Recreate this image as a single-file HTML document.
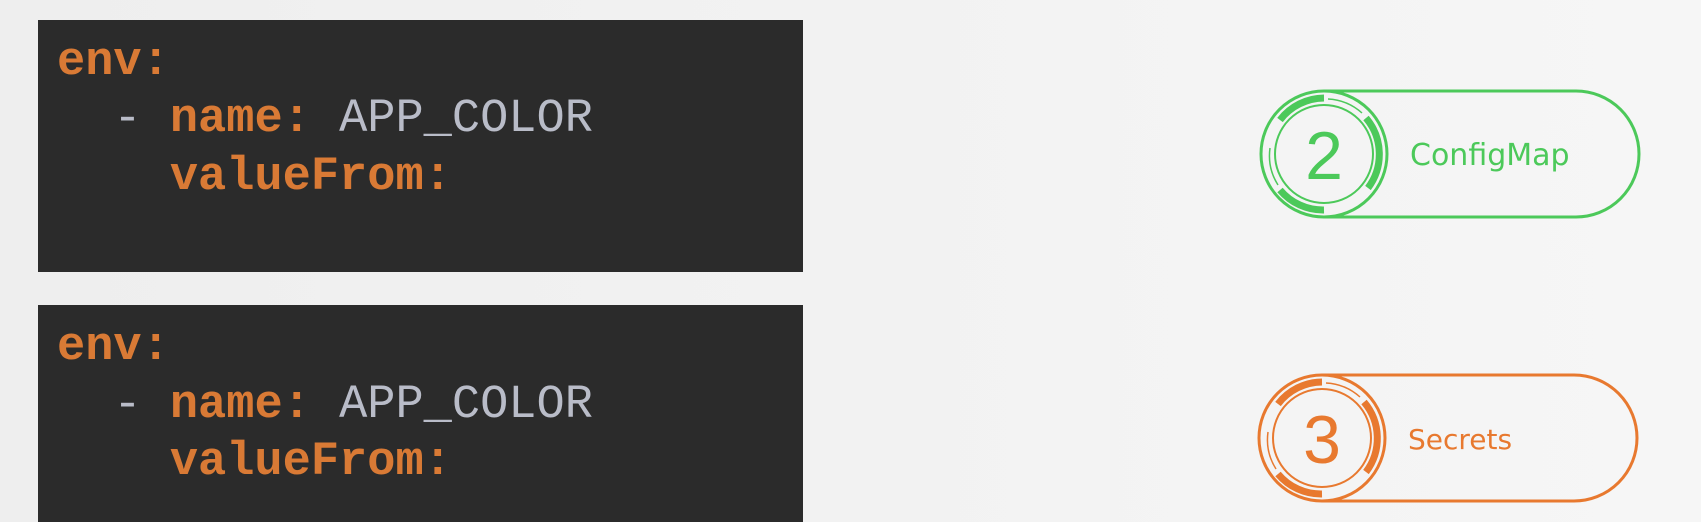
<!DOCTYPE html>
<html><head><style>
html,body{margin:0;padding:0}
body{width:1701px;height:522px;overflow:hidden;background:linear-gradient(90deg,#eeeeee,#f6f6f6);position:relative;font-family:"Liberation Sans",sans-serif}
.box{position:absolute;left:38px;width:765px;background:#2b2b2b}
.code{position:absolute;left:57px;font-family:"Liberation Mono",monospace;font-size:47px;white-space:pre;line-height:1}
.k{color:#d97a35;font-weight:bold}
.v{color:#b9bcc8}
.pill{position:absolute}
</style></head><body>
<div class="box" style="top:20px;height:252px"></div>
<div class="box" style="top:305px;height:217px"></div>
<div class="code" style="top:39px"><span class="k">env:</span></div>
<div class="code" style="top:96px"><span class="v">  - </span><span class="k">name:</span><span class="v"> APP_COLOR</span></div>
<div class="code" style="top:154px"><span class="k">    valueFrom:</span></div>
<div class="code" style="top:324px"><span class="k">env:</span></div>
<div class="code" style="top:382px"><span class="v">  - </span><span class="k">name:</span><span class="v"> APP_COLOR</span></div>
<div class="code" style="top:439px"><span class="k">    valueFrom:</span></div>

<svg class="pill" style="left:1258px;top:88px" width="386" height="132" viewBox="0 0 386 132">
<g fill="none" stroke="#4cc95a">
<path d="M66 3 H318 A63 63 0 0 1 318 129 H66" stroke-width="3"/>
<circle cx="66" cy="66" r="63" stroke-width="3"/>
<circle cx="66" cy="66" r="49" stroke-width="2"/>
<path d="M66 10 A56 56 0 0 0 22 32" stroke-width="7"/>
<path d="M108 30 A56 56 0 0 1 110 100" stroke-width="7"/>
<path d="M66 122 A56 56 0 0 1 22 102" stroke-width="7"/>
<path d="M70 11 A55 55 0 0 1 104 25" stroke-width="1.5"/>
<path d="M12 60 A55 55 0 0 0 20 97" stroke-width="1.5"/>
</g>
<text x="66" y="91" text-anchor="middle" font-size="68" fill="#4cc95a" font-family="Liberation Sans">2</text>
<text x="152" y="77" font-size="30" fill="#4cc95a" font-family="DejaVu Sans">ConfigMap</text>
</svg>

<svg class="pill" style="left:1256px;top:372px" width="386" height="132" viewBox="0 0 386 132">
<g fill="none" stroke="#e8792f">
<path d="M66 3 H318 A63 63 0 0 1 318 129 H66" stroke-width="3"/>
<circle cx="66" cy="66" r="63" stroke-width="3"/>
<circle cx="66" cy="66" r="49" stroke-width="2"/>
<path d="M66 10 A56 56 0 0 0 22 32" stroke-width="7"/>
<path d="M108 30 A56 56 0 0 1 110 100" stroke-width="7"/>
<path d="M66 122 A56 56 0 0 1 22 102" stroke-width="7"/>
<path d="M70 11 A55 55 0 0 1 104 25" stroke-width="1.5"/>
<path d="M12 60 A55 55 0 0 0 20 97" stroke-width="1.5"/>
</g>
<text x="66" y="91" text-anchor="middle" font-size="68" fill="#e8792f" font-family="Liberation Sans">3</text>
<text x="152" y="77" font-size="28" fill="#e8792f" font-family="DejaVu Sans">Secrets</text>
</svg>
</body></html>
